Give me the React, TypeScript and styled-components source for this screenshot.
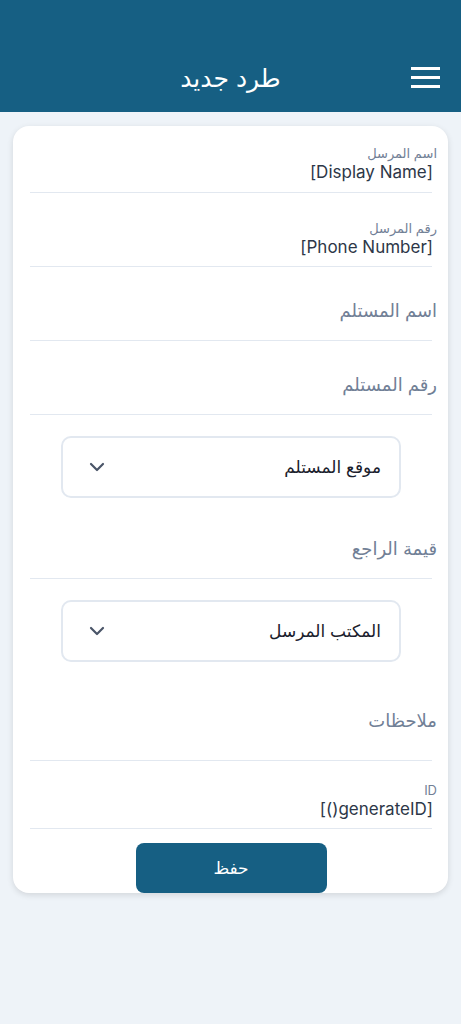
import React from 'react'
import styled, { createGlobalStyle } from 'styled-components'

const GlobalStyle = createGlobalStyle`
  html, body {
    margin: 0;
    padding: 0;
    background: #eef3f8;
  }
  body {
    font-family: Inter, "DejaVu Sans", sans-serif;
    min-height: 1024px;
  }
`

const Page = styled.div`
  direction: rtl;
  min-height: 1024px;
  background: #eef3f8;
`

const Header = styled.header`
  height: 112px;
  background: #165f83;
  display: grid;
  grid-template-columns: 60px 1fr 60px;
  align-items: end;
  padding-bottom: 18px;
  box-sizing: border-box;
`

const MenuButton = styled.button`
  background: none;
  border: 0;
  margin-right: 21px;
  width: 29px;
  height: 27px;
  display: flex;
  flex-direction: column;
  justify-content: space-between;
  padding: 3px 0;
  box-sizing: border-box;
  margin-bottom: 3px;
  span {
    display: block;
    height: 3px;
    background: #ffffff;
  }
`

const Title = styled.h1`
  margin: 0;
  color: #ffffff;
  font-size: 25px;
  font-weight: 400;
  text-align: center;
  line-height: 32px;
`

const Card = styled.main`
  margin: 14px 13px 0;
  background: #ffffff;
  border-radius: 16px;
  box-shadow: 0 2px 6px rgba(0, 0, 0, 0.12);
  padding: 0 16px 0 17px;
  overflow: hidden;
`

const Field = styled.div<{ $top: number; $bottom: number }>`
  padding-top: ${p => p.$top}px;
  padding-bottom: ${p => p.$bottom}px;
  border-bottom: 1px solid #e2e8f0;
`

const Label = styled.div`
  font-size: 13px;
  line-height: 16px;
  color: #718096;
  margin-right: -5px;
`

const Value = styled.div`
  font-size: 17px;
  line-height: 22px;
  color: #2d3748;
  margin-right: -1px;
`

const Placeholder = styled.div`
  font-size: 18px;
  line-height: 24px;
  color: #718096;
  margin-right: -5px;
`

const SelectWrap = styled.div`
  padding: 21px 31px 7px 31px;
`

const SelectBox = styled.div`
  height: 62px;
  border: 2px solid #e2e8f0;
  border-radius: 10px;
  box-sizing: border-box;
  display: flex;
  align-items: center;
  justify-content: space-between;
  padding: 0 18px 0 26px;
  font-size: 17px;
  color: #1a202c;
`

const Actions = styled.div`
  display: flex;
  justify-content: center;
  padding-top: 14px;
`

const SaveButton = styled.button`
  width: 191px;
  height: 50px;
  border: 0;
  border-radius: 8px;
  background: #165f83;
  color: #ffffff;
  font-family: inherit;
  font-size: 17px;
  padding: 0;
`

const Chevron = () => (
  <svg width="16" height="10" viewBox="0 0 16 10" fill="none">
    <path d="M2 2l6 6 6-6" stroke="#4a5568" strokeWidth="2.2" strokeLinecap="round" strokeLinejoin="round" />
  </svg>
)

export default function App() {
  return (
    <Page>
      <GlobalStyle />
      <Header>
        <MenuButton aria-label="menu">
          <span />
          <span />
          <span />
        </MenuButton>
        <Title>طرد جديد</Title>
        <div />
      </Header>
      <Card>
        <Field $top={19} $bottom={9}>
          <Label>اسم المرسل</Label>
          <Value>[Display Name]</Value>
        </Field>
        <Field $top={27} $bottom={8}>
          <Label>رقم المرسل</Label>
          <Value>[Phone Number]</Value>
        </Field>
        <Field $top={32} $bottom={17}>
          <Placeholder>اسم المستلم</Placeholder>
        </Field>
        <Field $top={32} $bottom={17}>
          <Placeholder>رقم المستلم</Placeholder>
        </Field>
        <SelectWrap>
          <SelectBox>
            <span>موقع المستلم</span>
            <Chevron />
          </SelectBox>
        </SelectWrap>
        <Field $top={32} $bottom={17}>
          <Placeholder>قيمة الراجع</Placeholder>
        </Field>
        <SelectWrap>
          <SelectBox>
            <span>المكتب المرسل</span>
            <Chevron />
          </SelectBox>
        </SelectWrap>
        <Field $top={40} $bottom={27}>
          <Placeholder>ملاحظات</Placeholder>
        </Field>
        <Field $top={21} $bottom={8}>
          <Label>ID</Label>
          <Value>[generateID()]</Value>
        </Field>
        <Actions>
          <SaveButton>حفظ</SaveButton>
        </Actions>
      </Card>
    </Page>
  )
}
